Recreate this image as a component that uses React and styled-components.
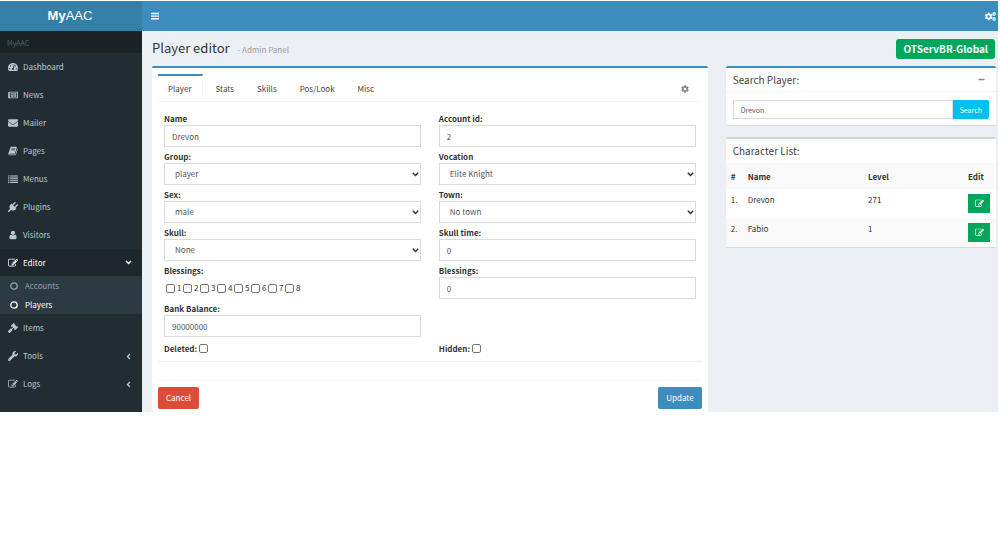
import React, { useState } from 'react';
import styled, { createGlobalStyle } from 'styled-components';
import {
    FaAngleDown, FaAngleLeft, FaCog, FaCogs, FaEnvelope,
    FaGavel, FaMinus, FaRegNewspaper, FaTachometerAlt, FaWrench,
} from 'react-icons/fa';

const Glyph = ({ d, size = 10 }) => (
    <svg width={size} height={size} viewBox="0 0 1792 1792" fill="currentColor" aria-hidden="true">
        <path d={d} />
    </svg>
);

const EditIcon = ({ size }) => (
    <Glyph size={size} d="M888 1184l116-116-152-152-116 116v56h96v96h56zm440-720q-16-16-33 1l-350 350q-17 17-1 33t33-1l350-350q17-17 1-33zm80 594v190q0 119-84.5 203.5t-203.5 84.5h-832q-119 0-203.5-84.5t-84.5-203.5v-832q0-119 84.5-203.5t203.5-84.5h832q63 0 117 25 15 7 18 23 3 17-9 29l-49 49q-14 14-32 8-23-6-45-6h-832q-66 0-113 47t-47 113v832q0 66 47 113t113 47h832q66 0 113-47t47-113v-126q0-13 9-22l64-64q15-15 35-7t20 29zm-96-738l288 288-672 672h-288v-288zm444 132l-92 92-288-288 92-92q28-28 68-28t68 28l152 152q28 28 28 68t-28 68z" />
);

const PlugIcon = () => (
    <Glyph d="M1755 453q37 38 37 90.5t-37 90.5l-401 400 150 150-160 160q-163 163-389.5 186.5t-411.5-100.5l-362 362h-181v-181l362-362q-124-185-100.5-411.5t186.5-389.5l160-160 150 150 400-401q38-37 91-37t90 37 37 90.5-37 90.5l-400 401 234 234 401-400q38-37 91-37t90 37z" />
);

const UserIcon = () => (
    <Glyph d="M1536 1399q0 109-62.5 187t-150.5 78h-854q-88 0-150.5-78t-62.5-187q0-85 8.5-160.5t31.5-152 58.5-131 94-89 134.5-34.5q131 128 313 128t313-128q76 0 134.5 34.5t94 89 58.5 131 31.5 152 8.5 160.5zm-256-887q0 159-112.5 271.5t-271.5 112.5-271.5-112.5-112.5-271.5 112.5-271.5 271.5-112.5 271.5 112.5 112.5 271.5z" />
);

const BookIcon = () => (
    <Glyph d="M1703 478q40 57 18 129l-275 906q-19 64-76.5 107.5t-122.5 43.5h-923q-77 0-148.5-53.5t-99.5-131.5q-24-67-2-127 0-4 3-27t4-37q1-8-3-21.5t-3-19.5q2-11 8-21t16.5-23.5 16.5-23.5q23-38 45-91.5t30-91.5q3-10 .5-30t-.5-28q3-11 17-28t17-23q21-36 42-92t25-90q1-9-2.5-32t.5-28q4-13 22-30.5t22-22.5q19-26 42.5-84.5t27.5-96.5q1-8-3-25.5t-2-26.5q2-8 9-18t18-23 17-21q8-12 16.5-30.5t15-35 16-36 19.5-32 26.5-23.5 36-11.5 47.5 5.5l-1 3q38-9 51-9h761q74 0 114 56t18 130l-274 906q-36 119-71.5 153.5t-128.5 34.5h-869q-27 0-38 15-11 16-1 43 24 70 144 70h923q29 0 56-15.5t35-41.5l300-987q7-22 5-57 38 15 59 43zm-1064 2q-4 13 2 22.5t20 9.5h608q13 0 25.5-9.5t16.5-22.5l21-64q4-13-2-22.5t-20-9.5h-608q-13 0-25.5 9.5t-16.5 22.5zm-83 256q-4 13 2 22.5t20 9.5h608q13 0 25.5-9.5t16.5-22.5l21-64q4-13-2-22.5t-20-9.5h-608q-13 0-25.5 9.5t-16.5 22.5z" />
);

const ListIcon = () => (
    <Glyph d="M0 256h256v192H0zM384 256h1408v192H384zM0 640h256v192H0zM384 640h1408v192H384zM0 1024h256v192H0zM384 1024h1408v192H384zM0 1408h256v192H0zM384 1408h1408v192H384z" />
);

const BarsIcon = () => (
    <svg width="8" height="8" viewBox="0 0 8 8" fill="currentColor" aria-hidden="true">
        <path d="M0 0.8h8v1.4H0zM0 3.4h8v1.4H0zM0 6h8v1.4H0z" />
    </svg>
);

const RingIcon = () => (
    <svg width="8" height="8" viewBox="0 0 8 8" fill="none" stroke="currentColor" strokeWidth="1.3" aria-hidden="true">
        <circle cx="4" cy="4" r="3.2" />
    </svg>
);

const ChevronIcon = () => (
    <svg width="7" height="5" viewBox="0 0 7 5" fill="none" stroke="#333" strokeWidth="1.5" aria-hidden="true">
        <path d="M0.8 0.8L3.5 3.5L6.2 0.8" />
    </svg>
);

const menu = [
    { label: 'Dashboard', icon: <FaTachometerAlt /> },
    { label: 'News', icon: <FaRegNewspaper /> },
    { label: 'Mailer', icon: <FaEnvelope /> },
    { label: 'Pages', icon: <BookIcon /> },
    { label: 'Menus', icon: <ListIcon /> },
    { label: 'Plugins', icon: <PlugIcon /> },
    { label: 'Visitors', icon: <UserIcon /> },
    {
        label: 'Editor', icon: <EditIcon />, open: true,
        children: [{ label: 'Accounts' }, { label: 'Players', current: true }],
    },
    { label: 'Items', icon: <FaGavel /> },
    { label: 'Tools', icon: <FaWrench />, collapsed: true },
    { label: 'Logs', icon: <EditIcon />, collapsed: true },
];

const tabs = ['Player', 'Stats', 'Skills', 'Pos/Look', 'Misc'];

const characters = [
    { id: 1, name: 'Drevon', level: 271 },
    { id: 2, name: 'Fabio', level: 1 },
];

const TextField = ({ id, label, value }) => (
    <Field>
        <Label htmlFor={id}>{label}</Label>
        <Input id={id} type="text" defaultValue={value} />
    </Field>
);

const SelectField = ({ id, label, options }) => (
    <Field>
        <Label htmlFor={id}>{label}</Label>
        <SelectWrap>
            <Select id={id}>
                {options.map(option => <option key={option}>{option}</option>)}
            </Select>
            <ChevronIcon />
        </SelectWrap>
    </Field>
);

const Sidebar = () => (
    <Side>
        <SideHeader>MyAAC</SideHeader>
        <nav>
            {menu.map(item => (
                <React.Fragment key={item.label}>
                    <MenuLink href="#" $active={item.open}>
                        <MenuIcon>{item.icon}</MenuIcon>
                        <span>{item.label}</span>
                        {item.open && <FaAngleDown className="arrow" />}
                        {item.collapsed && <FaAngleLeft className="arrow" />}
                    </MenuLink>
                    {item.children && (
                        <SubMenu>
                            {item.children.map(child => (
                                <SubLink key={child.label} href="#" $current={child.current}>
                                    <RingIcon />
                                    {child.label}
                                </SubLink>
                            ))}
                        </SubMenu>
                    )}
                </React.Fragment>
            ))}
        </nav>
    </Side>
);

const PlayerForm = () => {
    const [tab, setTab] = useState('Player');

    return (
        <EditorBox as="form" $accent="#3c8dbc" onSubmit={(e) => e.preventDefault()}>
            <Tabs>
                {tabs.map(name => (
                    <Tab key={name} type="button" $active={name === tab} onClick={() => setTab(name)}>
                        {name}
                    </Tab>
                ))}
                <GearButton type="button" aria-label="Settings"><FaCog /></GearButton>
            </Tabs>

            <Fields>
                <TextField id="name" label="Name" value="Drevon" />
                <TextField id="account" label="Account id:" value="2" />
                <SelectField id="group" label="Group:" options={['player', 'tutor', 'gamemaster']} />
                <SelectField id="vocation" label="Vocation" options={['Elite Knight', 'Knight']} />
                <SelectField id="sex" label="Sex:" options={['male', 'female']} />
                <SelectField id="town" label="Town:" options={['No town', 'Thais']} />
                <SelectField id="skull" label="Skull:" options={['None', 'White']} />
                <TextField id="skull-time" label="Skull time:" value="0" />
                <Field role="group" aria-labelledby="blessings-title">
                    <Label as="span" id="blessings-title">Blessings:</Label>
                    <Checks>
                        {[1, 2, 3, 4, 5, 6, 7, 8].map(n => (
                            <label key={n}>
                                <Checkbox type="checkbox" />
                                {n}
                            </label>
                        ))}
                    </Checks>
                </Field>
                <TextField id="blessings" label="Blessings:" value="0" />
                <TextField id="balance" label="Bank Balance:" value="90000000" />
                <span />
                <InlineLabel>Deleted:<Checkbox type="checkbox" /></InlineLabel>
                <InlineLabel>Hidden:<Checkbox type="checkbox" /></InlineLabel>
            </Fields>

            <Footer>
                <Button type="button" $color="#dd4b39">Cancel</Button>
                <Button type="submit" $color="#3c8dbc">Update</Button>
            </Footer>
        </EditorBox>
    );
};

const SearchPlayer = () => (
    <Box $accent="#3c8dbc">
        <BoxHeader $divided>
            <h2>Search Player:</h2>
            <CollapseButton type="button" aria-label="Collapse"><FaMinus /></CollapseButton>
        </BoxHeader>
        <SearchRow onSubmit={(e) => e.preventDefault()}>
            <SearchInput type="text" aria-label="Search Player" defaultValue="Drevon" />
            <SearchButton type="submit">Search</SearchButton>
        </SearchRow>
    </Box>
);

const CharacterList = () => (
    <Box $accent="#d2d6de">
        <BoxHeader>
            <h2>Character List:</h2>
        </BoxHeader>
        <Table>
            <thead>
                <tr>
                    <th className="index">#</th>
                    <th>Name</th>
                    <th className="level">Level</th>
                    <th className="edit">Edit</th>
                </tr>
            </thead>
            <tbody>
                {characters.map(character => (
                    <tr key={character.id}>
                        <td>{character.id}.</td>
                        <td>{character.name}</td>
                        <td>{character.level}</td>
                        <td>
                            <EditLink href="#" aria-label={`Edit ${character.name}`}>
                                <EditIcon size={9} />
                            </EditLink>
                        </td>
                    </tr>
                ))}
            </tbody>
        </Table>
    </Box>
);

const App = () => (
    <>
        <GlobalStyle />
        <Page>
            <Logo href="#"><b>My</b>AAC</Logo>
            <Topbar>
                <BarButton type="button" aria-label="Toggle navigation"><BarsIcon /></BarButton>
                <BarButton type="button" aria-label="Settings"><FaCogs /></BarButton>
            </Topbar>
            <Sidebar />
            <Content>
                <TitleRow>
                    <h1>Player editor <small>- Admin Panel</small></h1>
                    <ServerBadge>OTServBR-Global</ServerBadge>
                </TitleRow>
                <Columns>
                    <PlayerForm />
                    <Aside>
                        <SearchPlayer />
                        <CharacterList />
                    </Aside>
                </Columns>
            </Content>
        </Page>
    </>
);

export default App;

const GlobalStyle = createGlobalStyle`
  * { box-sizing: border-box; }
  body { margin: 0; background: #fff; }
  body, input, select, button {
    font-family: "Noto Sans CJK SC", "Open Sans", sans-serif;
    font-size: 8px; line-height: 12px; color: #333;
  }
  button { cursor: pointer; border: none; padding: 0; background: transparent; }
  a { text-decoration: none; }
  svg { display: block; flex: none; }
`;

const Page = styled.div`
  display: grid; grid-template-columns: 142px minmax(0, 1fr);
  padding: 1px 2px 0 0;
`;

const Logo = styled.a`
  height: 30px; padding-right: 2px; background: #367fa9; color: #fff; text-align: center;
  font: 13px/30px "Liberation Sans", Arial, sans-serif;
`;

const Topbar = styled.header`
  display: flex; justify-content: space-between; align-items: center;
  background: #3c8dbc; padding: 0 2px 0 9px;
`;

const BarButton = styled.button`
  color: #fff; font-size: 11px;
`;

const Side = styled.aside`
  background: #222d32;
`;

const SideHeader = styled.div`
  height: 22px; padding-left: 7px; line-height: 24px; font-size: 7px;
  background: #1a2226; color: #4b646f;
`;

const MenuLink = styled.a`
  display: flex; align-items: center; gap: 5px;
  height: ${({ $active }) => $active ? '27px' : '28px'}; padding: 0 9px 0 8px;
  background: ${({ $active }) => $active ? '#1e282c' : 'transparent'};
  color: ${({ $active }) => $active ? '#fff' : '#b8c7ce'};
  .arrow { margin-left: auto; font-size: 9px; }
`;

const MenuIcon = styled.span`
  display: flex; justify-content: center; width: 10px; font-size: 10px;
`;

const SubMenu = styled.div`
  background: #2c3b41;
`;

const SubLink = styled.a`
  display: flex; align-items: center; gap: 7px;
  height: 19px; padding-left: 10px;
  color: ${({ $current }) => $current ? '#fff' : '#8aa4af'};
`;

const Content = styled.main`
  background: #ecf0f5; padding: 0 2px 0 10px;
`;

const TitleRow = styled.div`
  display: flex; justify-content: space-between; align-items: center; height: 35px;
  padding-right: 1px;
  h1 { margin: 0; font-size: 13px; line-height: 20px; font-weight: 400; }
  small { margin-left: 5px; font-size: 8px; color: #999; }
`;

const ServerBadge = styled.span`
  padding: 0 7px; border-radius: 3px; background: #00a65a; color: #fff;
  font-size: 10px; line-height: 20px; font-weight: 700;
`;

const Columns = styled.div`
  display: grid; grid-template-columns: minmax(0, 37fr) minmax(0, 18fr); gap: 18px;
`;

const Aside = styled.div`
  display: flex; flex-direction: column; gap: 12px;
`;

const Box = styled.section`
  background: #fff; border-top: 2px solid ${({ $accent }) => $accent};
  border-radius: 2px; box-shadow: 0 1px 1px rgba(0, 0, 0, 0.1);
`;

const EditorBox = styled(Box)`
  padding: 6px 6px 3px; box-shadow: none;
`;

const BoxHeader = styled.div`
  display: flex; justify-content: space-between; align-items: center;
  height: 24px; padding: 0 11px 0 7px;
  border-bottom: 1px solid ${({ $divided }) => $divided ? '#f4f4f4' : 'transparent'};
  h2 { margin: 0; font-size: 10px; line-height: 20px; font-weight: 400; color: #444; }
`;

const CollapseButton = styled.button`
  color: #888; font-size: 7px;
`;

const Tabs = styled.div`
  display: flex; height: 28px; border-bottom: 1px solid #f4f4f4;
`;

const Tab = styled.button`
  padding: 0 10px; margin-right: 3px; color: #444;
  border-top: 2px solid ${({ $active }) => $active ? '#3c8dbc' : 'transparent'};
  border-right: ${({ $active }) => $active ? '1px solid #f4f4f4' : 'none'};
`;

const GearButton = styled.button`
  margin-left: auto; padding: 2px 13px 0; color: #888;
`;

const Fields = styled.div`
  display: grid; grid-template-columns: repeat(2, minmax(0, 1fr)); column-gap: 18px;
  padding: 11px 6px 5px; border-bottom: 1px solid #eee;
`;

const Field = styled.div`
  display: flex; flex-direction: column; height: 38px;
`;

const Label = styled.label`
  height: 12px; font-weight: 700;
`;

const Input = styled.input`
  width: 100%; height: 22px; padding: 0 7px;
  border: 1px solid #d8dbe2; border-radius: 0; background: #fff; color: #555;
`;

const SelectWrap = styled.div`
  display: grid; align-items: center;
  > * { grid-area: 1 / 1; }
  svg { justify-self: end; margin-right: 2px; pointer-events: none; }
`;

const Select = styled(Input).attrs({ as: 'select' })`
  appearance: none; padding: 0 10px;
`;

const Checks = styled.div`
  display: flex; align-items: center; gap: 1px; height: 22px; padding-left: 2px;
  label { display: flex; align-items: center; gap: 2px; width: 16px; }
`;

const Checkbox = styled.input`
  appearance: none; width: 9px; height: 9px; margin: 0;
  border: 1px solid #767676; border-radius: 2px; background: #fff;
  &:checked { background: #3c8dbc; }
`;

const InlineLabel = styled.label`
  display: flex; align-items: center; gap: 2px; height: 15px; font-weight: 700;
`;

const Footer = styled.div`
  display: flex; justify-content: space-between;
  margin-top: 18px; padding-top: 6px; border-top: 1px solid #f4f4f4;
`;

const Button = styled.button`
  height: 22px; padding: 0 8px; border-radius: 2px; color: #fff;
  background: ${({ $color }) => $color};
`;

const SearchRow = styled.form`
  display: flex; padding: 8px 7px 6px;
`;

const SearchInput = styled(Input)`
  flex: 1; min-width: 0; height: 19px; font-size: 7px;
`;

const SearchButton = styled.button`
  height: 19px; padding: 0 7px; border-radius: 0 2px 2px 0;
  background: #00c0ef; color: #fff; font-size: 7px;
`;

const Table = styled.table`
  width: 100%; border-collapse: collapse; table-layout: fixed;

  th, td { padding: 5px; text-align: left; vertical-align: top; }
  th { padding: 8px 5px 6px; font-weight: 700; }
  tr { background: #f9f9f9; }
  tbody tr:nth-child(odd) { background: #fff; }
  .index { width: 17px; }
  .level { width: 100px; }
  .edit { width: 33px; }
`;

const EditLink = styled.a`
  display: flex; align-items: center; justify-content: center;
  width: 22px; height: 19px; background: #00a65a; color: #fff;
`;
